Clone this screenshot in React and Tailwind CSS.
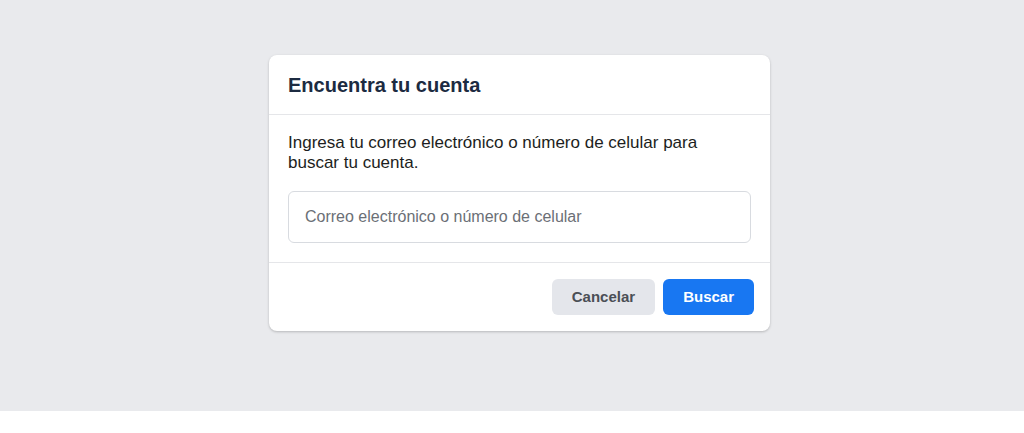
import React from 'react';

export default function App() {
  return (
    <div className="min-h-screen bg-white font-['Liberation_Sans',Arial,sans-serif]">
      <div className="h-[411px] bg-[#e9eaed] pl-[15px] pt-[55px] flex justify-center items-start">
        {/* Find account card */}
        <div className="w-[501px] bg-white rounded-lg shadow-[0_1px_3px_rgba(0,0,0,0.15),0_1px_2px_rgba(0,0,0,0.08)]">
          <div className="h-[60px] pt-px px-[19px] flex items-center border-b border-[#e5e6e9]">
            <h2 className="text-[20px] font-bold text-[#1c2b41]">Encuentra tu cuenta</h2>
          </div>
          <div className="px-[19px] pt-[18px] pb-[19px] border-b border-[#e5e6e9]">
            <p className="text-[17px] leading-5 text-[#1c1e21]">
              Ingresa tu correo electrónico o número de celular para buscar tu cuenta.
            </p>
            <input
              type="text"
              placeholder="Correo electrónico o número de celular"
              className="mt-[18px] w-full h-[52px] px-4 text-[16px] text-[#1c1e21] placeholder:text-[#6b6f76] border border-[#d8dbe0] rounded-md outline-none"
            />
          </div>
          <div className="px-4 py-4 flex justify-end gap-2">
            <button className="h-9 px-5 rounded-md bg-[#e4e6eb] text-[15px] font-bold text-[#4b4f56]">
              Cancelar
            </button>
            <button className="h-9 px-5 rounded-md bg-[#1877f2] text-[15px] font-bold text-white">
              Buscar
            </button>
          </div>
        </div>
      </div>
    </div>
  );
}
